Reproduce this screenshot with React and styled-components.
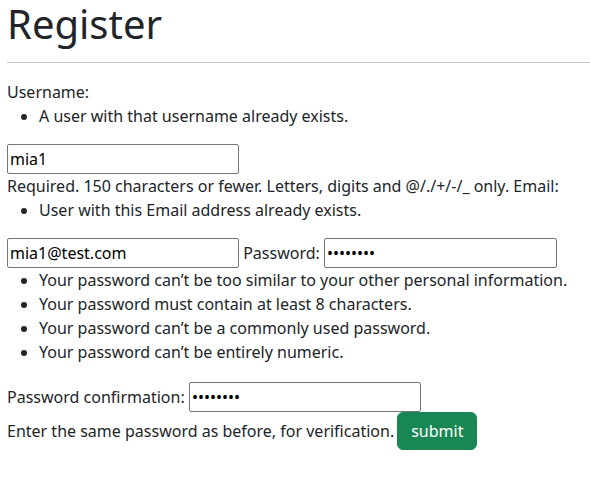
import styled, { createGlobalStyle } from 'styled-components'

const GlobalStyle = createGlobalStyle`
  * {
    box-sizing: border-box;
  }
  body {
    margin: 0;
    background: #fff;
    color: #212529;
    font-family: 'Noto Sans', 'Open Sans', sans-serif;
    font-size: 16px;
    line-height: 1.5;
  }
`

const Page = styled.main`
  padding-left: 7px;
`

const Title = styled.h1`
  margin: 0;
  font-size: 40px;
  font-weight: 400;
  line-height: 48px;
`

const Divider = styled.hr`
  margin: 14px 0 17px;
  border: 0;
  border-top: 1px solid #212529;
  opacity: 0.25;
`

const Form = styled.form`
  margin: 0;
`

const Label = styled.label``

const NoteList = styled.ul`
  margin: 0 0 ${({ $after }) => $after || 16}px;
  padding-left: 32px;
`

const TextInput = styled.input`
  width: ${({ $width }) => $width || 232}px;
  height: 30px;
  margin: 0;
  padding: 1px 2px;
  font: inherit;
  color: #000;
  border: 1px solid #767676;
  border-radius: 2px;
  background: #fff;
  vertical-align: baseline;
`

const HelpText = styled.span``

const SubmitButton = styled.button`
  margin: 0 0 0 3px;
  padding: 6px 13px;
  font: inherit;
  color: #fff;
  background-color: #198754;
  border: 1px solid #198754;
  border-radius: 6px;
  cursor: pointer;
`

export default function App() {
  return (
    <Page>
      <GlobalStyle />
      <Title>Register</Title>
      <Divider />
      <Form onSubmit={(e) => e.preventDefault()}>
        <Label htmlFor="id_username">Username:</Label>
        <NoteList>
          <li>A user with that username already exists.</li>
        </NoteList>
        <TextInput id="id_username" type="text" defaultValue="mia1" />
        <br />
        <HelpText>
          Required. 150 characters or fewer. Letters, digits and @/./+/-/_ only.
        </HelpText>{' '}
        <Label htmlFor="id_email">Email:</Label>
        <NoteList>
          <li>User with this Email address already exists.</li>
        </NoteList>
        <TextInput id="id_email" type="email" defaultValue="mia1@test.com" />{' '}
        <Label htmlFor="id_password1">Password:</Label>{' '}
        <TextInput id="id_password1" type="password" defaultValue="mia1test" $width={233} />
        <NoteList $after={18}>
          <li>Your password can’t be too similar to your other personal information.</li>
          <li>Your password must contain at least 8 characters.</li>
          <li>Your password can’t be a commonly used password.</li>
          <li>Your password can’t be entirely numeric.</li>
        </NoteList>
        <Label htmlFor="id_password2">Password confirmation:</Label>{' '}
        <TextInput id="id_password2" type="password" defaultValue="mia1test" />
        <br />
        <HelpText>Enter the same password as before, for verification.</HelpText>
        <SubmitButton type="submit">submit</SubmitButton>
      </Form>
    </Page>
  )
}
